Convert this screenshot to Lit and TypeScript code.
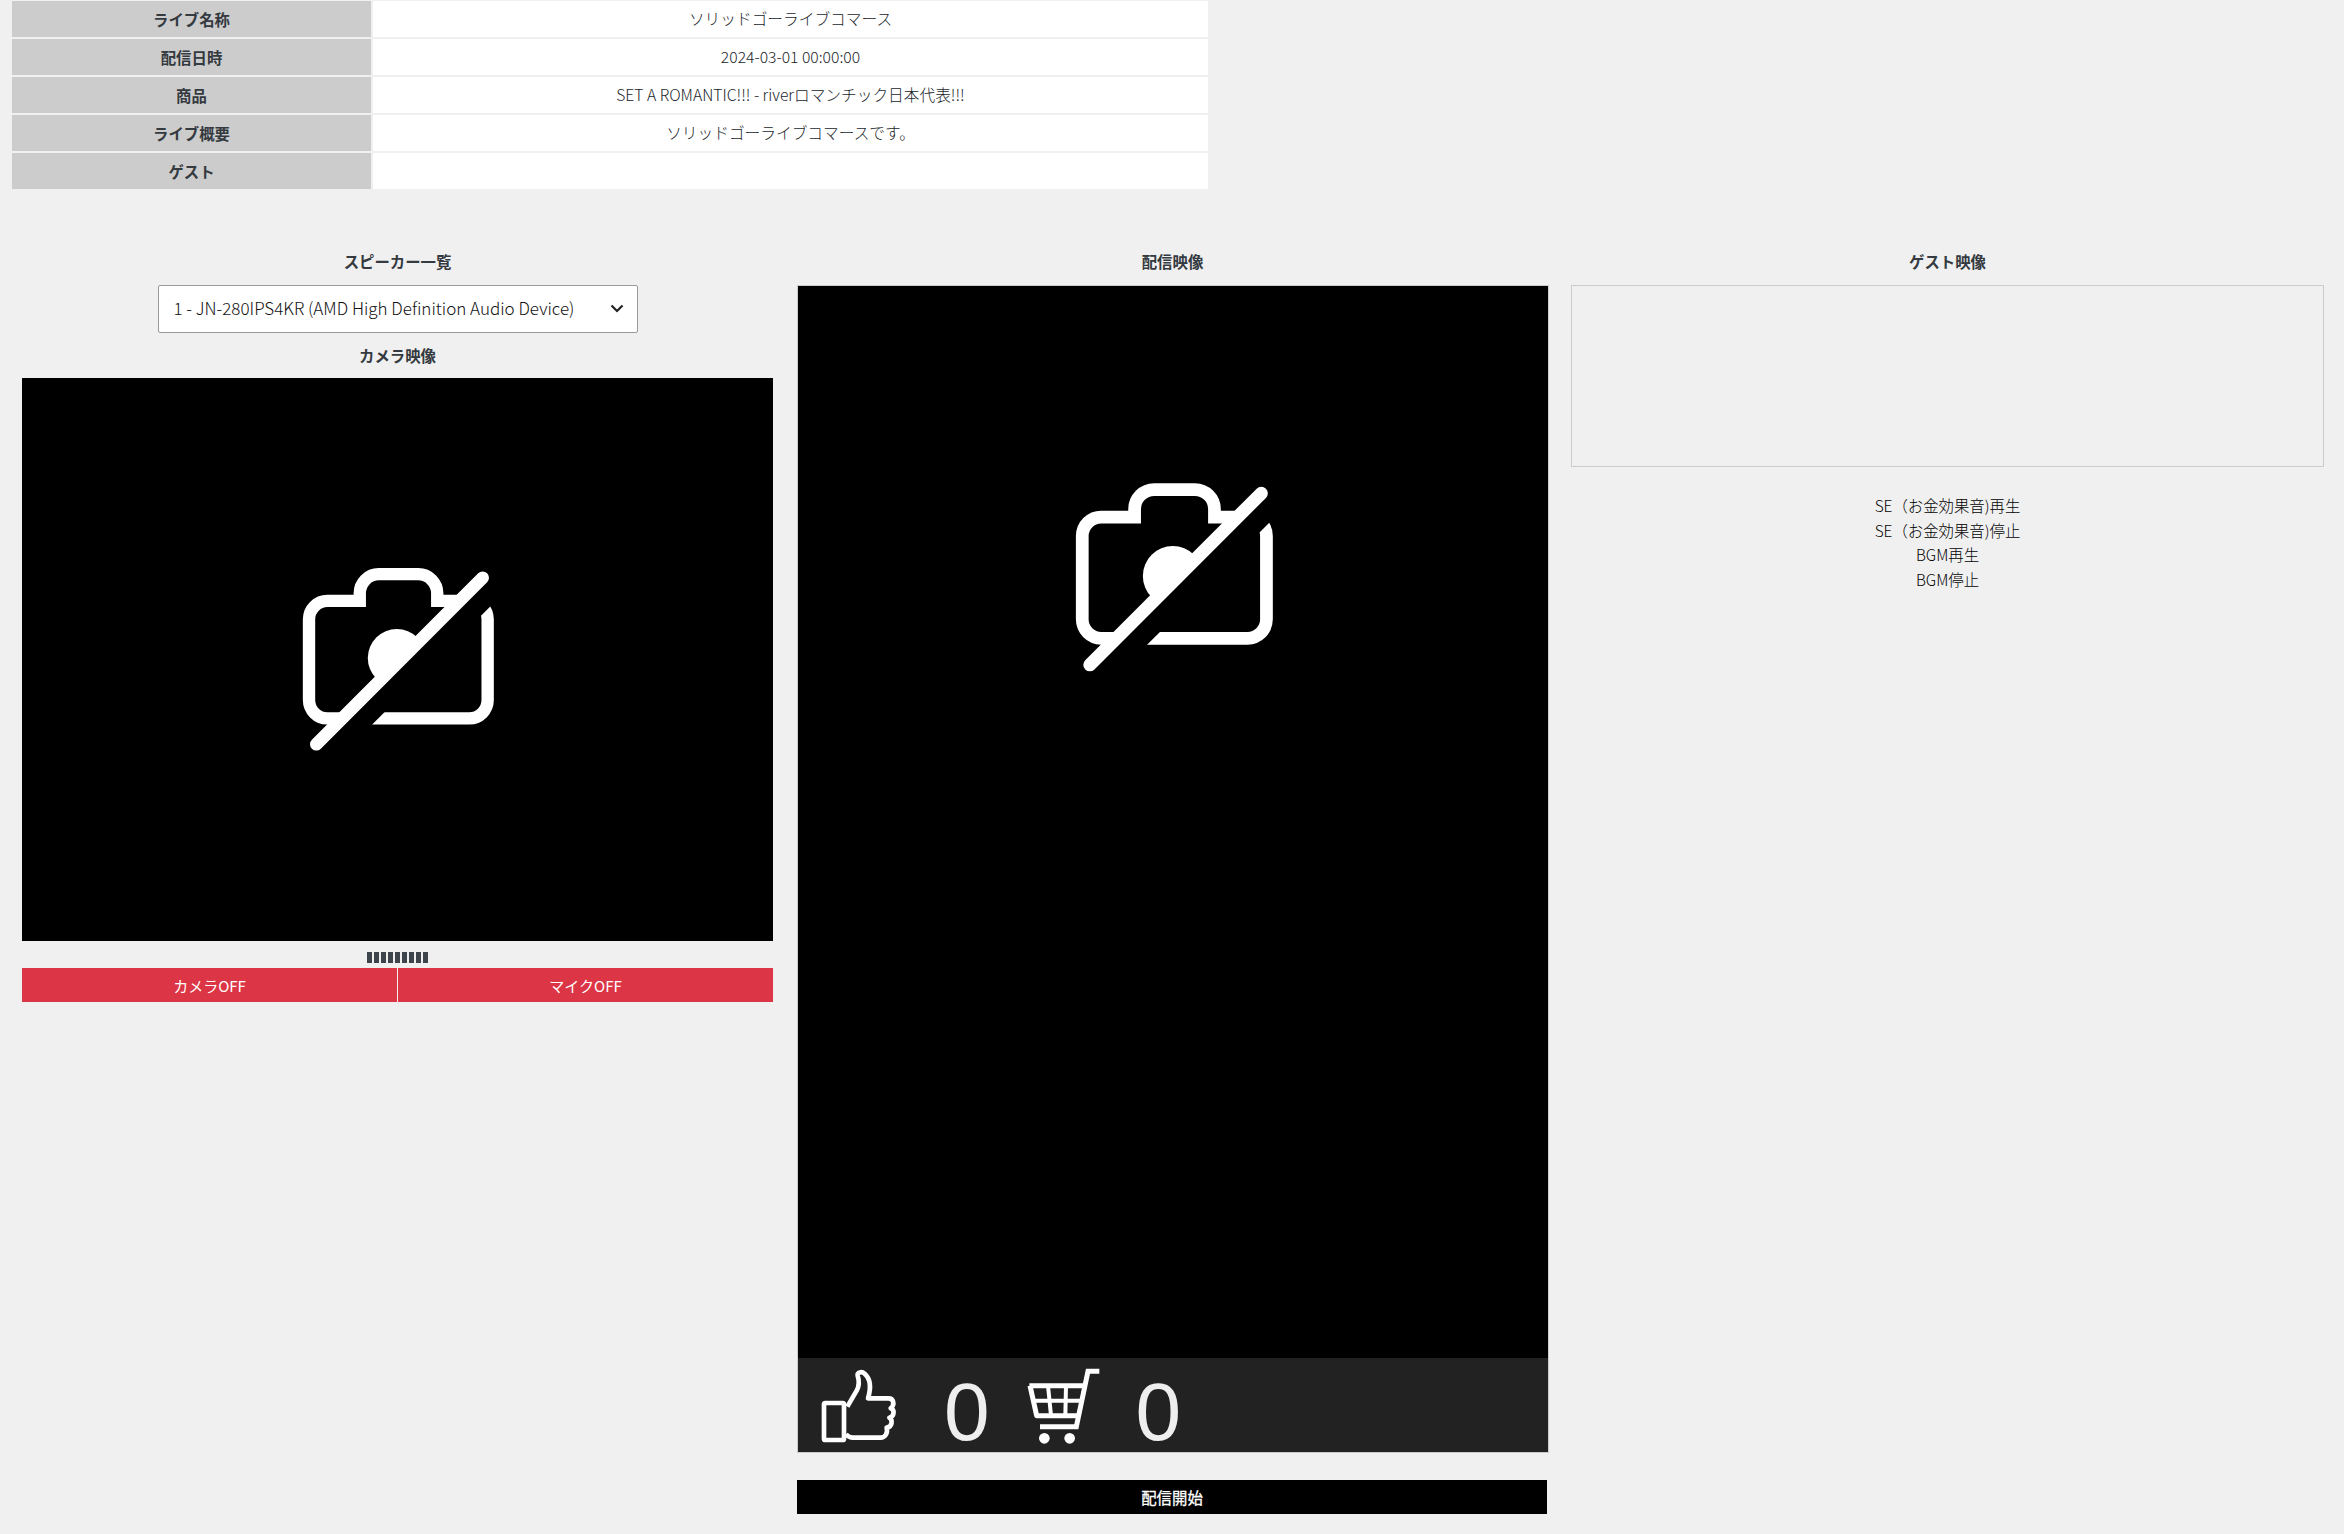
import { LitElement, html, css, svg } from "lit";
import { customElement } from "lit/decorators.js";

const cameraOff = svg`
  <path d="M270 183V160A57 57 0 0 1 327 103H445A57 57 0 0 1 502 160V183H598A55 55 0 0 1 653 238V480A55 55 0 0 1 598 535H173A55 55 0 0 1 118 480V238A55 55 0 0 1 173 183Z" fill="none" stroke="#fff" stroke-width="37"/>
  <circle cx="381" cy="354" r="87" fill="#fff"/>
  <path d="M60 755L755 60" stroke="#000" stroke-width="64"/>
  <path d="M140 612L638 114" stroke="#fff" stroke-width="38" stroke-linecap="round"/>`;

const rows: [string, string][] = [
  ["ライブ名称", "ソリッドゴーライブコマース"],
  ["配信日時", "2024-03-01 00:00:00"],
  ["商品", "SET A ROMANTIC!!! - riverロマンチック日本代表!!!"],
  ["ライブ概要", "ソリッドゴーライブコマースです。"],
  ["ゲスト", ""],
];

@customElement("app-root")
export class AppRoot extends LitElement {
  static styles = css`
    :host {
      display: block;
      min-height: 1534px;
      background: #f0f0f0;
      color: #343a40;
      font-family: "Noto Sans CJK JP", "Noto Sans", sans-serif;
      font-size: 15.4px;
      line-height: 24px;
    }
    .info {
      display: grid;
      grid-template-columns: 359px 835px;
      grid-auto-rows: 36px;
      gap: 2px;
      padding: 1px 0 0 12px;
    }
    .th, .td {
      display: flex;
      align-items: center;
      justify-content: center;
      padding-bottom: 1px;
      box-sizing: border-box;
    }
    .th { background: #ccc; font-weight: 700; }
    .td { background: #fff; color: #212529; font-size: 15.7px; font-weight: 300; }
    .cols {
      display: grid;
      grid-template-columns: 751px 752px 753px;
      column-gap: 23px;
      padding: 60px 0 0 22px;
    }
    .col { display: flex; flex-direction: column; min-width: 0; }
    .mid { margin-left: 1px; }
    .label { font-weight: 700; text-align: center; height: 24px; }
    .select-wrap {
      position: relative;
      width: 480px;
      height: 48px;
      margin: 12px auto 10px;
      align-self: center;
    }
    select {
      appearance: none;
      width: 100%;
      height: 100%;
      padding: 0 40px 2px 15px;
      border: 1px solid #999;
      border-radius: 2px;
      background: #fff;
      color: #111;
      font: inherit;
      font-size: 17px;
      font-weight: 300;
    }
    .chev { position: absolute; right: 14px; top: 19px; pointer-events: none; }
    .video {
      display: flex;
      align-items: center;
      justify-content: center;
      height: 563px;
      margin-top: 11px;
      background: #000;
    }
    .icon { display: block; width: 193px; height: 183px; }
    .meter {
      display: flex;
      justify-content: center;
      gap: 2px;
      height: 11px;
      margin-top: 11px;
    }
    .meter i { width: 5px; background: #3d444b; }
    .btns {
      display: flex;
      gap: 1px;
      margin-top: 5px;
    }
    .btn {
      flex: 1;
      height: 34px;
      background: #dc3545;
      color: #fff;
      text-align: center;
      line-height: 35px;
      font-size: 15px;
    }
    .stage {
      display: flex;
      flex-direction: column;
      width: 752px;
      height: 1168px;
      margin-top: 12px;
      border: 1px solid #ccc;
      box-sizing: border-box;
    }
    .feed {
      flex: 1;
      background: #000;
      display: flex;
      justify-content: center;
      padding: 197px 0 0 0;
      box-sizing: border-box;
    }
    .feed .icon { width: 199px; height: 189px; }
    .stats {
      display: flex;
      align-items: center;
      height: 94px;
      background: #222;
      color: #eee;
      padding-left: 12px;
    }
    .stats svg { display: block; width: 100px; height: 92px; }
    .num {
      font-family: "Liberation Sans", Arial, sans-serif;
      font-size: 82px;
      line-height: 94px;
      padding-top: 13px;
    }
    .n1 { margin: 0 26px 0 34px; }
    .n2 { margin-left: 20px; }
    .start {
      height: 34px;
      margin-top: 27px;
      width: 750px;
      background: #000;
      color: #fff;
      text-align: center;
      line-height: 34px;
      -webkit-text-stroke: 0.3px #fff;
    }
    .guest {
      height: 182px;
      margin-top: 12px;
      border: 1px solid #ccc;
      box-sizing: border-box;
    }
    .controls {
      margin-top: 26px;
      text-align: center;
      color: #000;
      font-weight: 300;
      line-height: 24.5px;
    }
  `;

  private cam() {
    return html`<svg class="icon" viewBox="94 85 578 547" aria-hidden="true">${cameraOff}</svg>`;
  }

  render() {
    return html`
      <div class="info">
        ${rows.map(([k, v]) => html`<div class="th">${k}</div><div class="td">${v}</div>`)}
      </div>
      <div class="cols">
        <div class="col">
          <div class="label">スピーカー一覧</div>
          <div class="select-wrap">
            <select><option>1 - JN-280IPS4KR (AMD High Definition Audio Device)</option></select>
            <svg class="chev" width="14" height="9" viewBox="0 0 14 9"><path d="M1.5 1.5L7 7L12.5 1.5" fill="none" stroke="#222" stroke-width="2.2"/></svg>
          </div>
          <div class="label">カメラ映像</div>
          <div class="video">${this.cam()}</div>
          <div class="meter">${Array.from({ length: 9 }, () => html`<i></i>`)}</div>
          <div class="btns"><div class="btn">カメラOFF</div><div class="btn">マイクOFF</div></div>
        </div>
        <div class="col mid">
          <div class="label">配信映像</div>
          <div class="stage">
            <div class="feed">${this.cam()}</div>
            <div class="stats">
              <svg viewBox="0 0 300 276" aria-hidden="true">
                <rect x="42" y="132" width="60" height="111" rx="4" fill="none" stroke="#fff" stroke-width="14"/>
                <path d="M112 143L140 95C148 80 147 62 143 50C141 40 155 36 164 44C180 58 184 85 174 118H236C250 118 256 136 242 148C254 152 254 172 238 176C250 184 246 204 230 206C234 222 226 236 212 236H128C120 236 114 232 108 226" fill="none" stroke="#fff" stroke-width="14" stroke-linejoin="round"/>
              </svg>
              <span class="num n1">0</span>
              <svg viewBox="0 0 300 276" aria-hidden="true">
                <g fill="none" stroke="#fff">
                  <path d="M250 37H216L181 203H72" stroke-width="15"/>
                  <path d="M40 80H205M42 80L62 170H186" stroke-width="15" stroke-linejoin="round"/>
                  <path d="M96 80L105 170M150 80L148 170M50 125H196" stroke-width="12"/>
                </g>
                <circle cx="85" cy="238" r="16" fill="#fff"/>
                <circle cx="161" cy="238" r="16" fill="#fff"/>
              </svg>
              <span class="num n2">0</span>
            </div>
          </div>
          <div class="start">配信開始</div>
        </div>
        <div class="col">
          <div class="label">ゲスト映像</div>
          <div class="guest"></div>
          <div class="controls">
            <div>SE（お金効果音)再生</div>
            <div>SE（お金効果音)停止</div>
            <div>BGM再生</div>
            <div>BGM停止</div>
          </div>
        </div>
      </div>
    `;
  }
}
